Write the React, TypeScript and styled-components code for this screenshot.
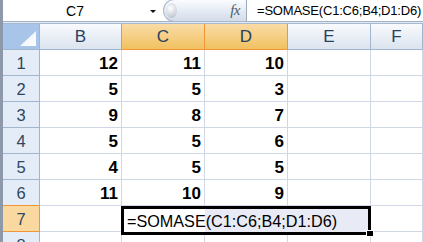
import styled, { createGlobalStyle } from 'styled-components';

const GlobalStyle = createGlobalStyle`
  html, body {
    margin: 0;
    padding: 0;
    background: #ffffff;
    overflow: hidden;
  }
  * {
    box-sizing: border-box;
  }
`;

const Shell = styled.div`
  display: flex;
  width: 423px;
  height: 242px;
  overflow: hidden;
  background: #ffffff;
  font-family: 'Liberation Sans', Arial, sans-serif;
`;

const LeftEdge = styled.div`
  flex: 0 0 3px;
  background: #8d99a9;
`;

const Main = styled.div`
  flex: 1;
  min-width: 0;
  display: flex;
  flex-direction: column;
`;

const FormulaBar = styled.div`
  display: flex;
  height: 22px;
  flex-shrink: 0;
  border-bottom: 1px solid #9fb3cb;
  background: #ffffff;
`;

const NameBox = styled.div`
  display: flex;
  align-items: center;
  flex: 0 0 160px;
  background: #ffffff;
`;

const NameText = styled.span`
  flex: 0 0 144px;
  text-align: center;
  font-size: 14px;
  color: #000;
`;

const DropArrow = styled.span`
  flex: 0 0 11px;
  display: flex;
  justify-content: center;
  padding-top: 1px;
  &::before {
    content: '';
    border-left: 3px solid transparent;
    border-right: 3px solid transparent;
    border-top: 3px solid #111;
  }
`;

const Pill = styled.div`
  display: flex;
  align-items: center;
  justify-content: space-between;
  flex: 0 0 84px;
  margin-top: -1px;
  height: 23px;
  padding: 0 6px 0 2px;
  border: 1px solid #a9b8cb;
  border-right: 1px solid #9aabbf;
  border-radius: 12px 0 0 12px;
  background: linear-gradient(#fbfcfe, #e4eaf3 55%, #d3dce9);
`;

const Knob = styled.span`
  width: 11px;
  height: 15px;
  border-radius: 50%;
  background: radial-gradient(circle at 40% 35%, #ffffff, #c7ced8 70%, #a9b2be);
`;

const Fx = styled.span`
  font-family: 'Liberation Serif', 'Times New Roman', serif;
  font-style: italic;
  font-size: 15px;
  color: #4f5b6c;
  letter-spacing: -0.5px;
`;

const FormulaInput = styled.div`
  flex: 1;
  min-width: 0;
  display: flex;
  align-items: center;
  padding-left: 10px;
  font-size: 13px;
  letter-spacing: -0.2px;
  color: #000;
  white-space: nowrap;
`;

const Band = styled.div`
  height: 2px;
  flex-shrink: 0;
  background: #e1e8f2;
  border-bottom: 1px solid #a8bad0;
`;

const Grid = styled.div`
  position: relative;
  display: grid;
  grid-template-columns: 37px 82px 83px 83px 83px 1fr;
  grid-template-rows: 26px repeat(8, 26px);
`;

const Corner = styled.div`
  display: flex;
  align-items: flex-end;
  justify-content: flex-end;
  padding: 0 3px 3px 0;
  background: #a9c4e9;
  border-right: 1px solid #9eb6ce;
  border-bottom: 1px solid #9eb6ce;
`;

const ColHead = styled.div<{ $sel?: boolean; $edge?: boolean }>`
  display: flex;
  align-items: center;
  justify-content: center;
  font-size: 17px;
  color: #27415f;
  background: ${({ $sel }) =>
    $sel
      ? 'linear-gradient(#f9dba5, #f6cf85 50%, #f1c15f)'
      : 'linear-gradient(#f8fafd, #eaeff6 50%, #dbe3ee)'};
  border-bottom: 1px solid ${({ $sel }) => ($sel ? '#f29536' : '#9eb6ce')};
  border-right: 1px solid
    ${({ $sel, $edge }) => ($sel || $edge ? '#f29536' : '#9eb6ce')};
`;

const RowHead = styled.div<{ $sel?: boolean; $edge?: boolean }>`
  display: flex;
  align-items: center;
  justify-content: center;
  padding-top: 2px;
  font-size: 16.5px;
  color: #2f4560;
  background: ${({ $sel }) => ($sel ? '#f9d99f' : '#e4ecf7')};
  border-right: 1px solid ${({ $sel }) => ($sel ? '#f29536' : '#9eb6ce')};
  border-bottom: 1px solid
    ${({ $sel, $edge }) => ($sel || $edge ? '#f29536' : '#9eb6ce')};
`;

const Cell = styled.div`
  display: flex;
  align-items: center;
  justify-content: flex-end;
  padding: 3px 3px 0 0;
  font-size: 17px;
  font-weight: bold;
  color: #000;
  background: #ffffff;
  border-right: 1px solid #d0d7e5;
  border-bottom: 1px solid #d0d7e5;
`;

const EditBox = styled.div`
  position: absolute;
  left: 118px;
  top: 182px;
  width: 250px;
  height: 29px;
  display: flex;
  align-items: center;
  padding: 2px 0 0 3px;
  border: 3px solid #000;
  background: linear-gradient(to right, #ffffff 81px, #e8eaf5 81px);
  font-size: 16.2px;
  color: #000;
  white-space: nowrap;
`;

const FillHandle = styled.span`
  position: absolute;
  right: -5px;
  bottom: -4px;
  width: 6px;
  height: 5px;
  background: #000;
  outline: 1px solid #ffffff;
`;

const columns = ['B', 'C', 'D', 'E', 'F'];
const selectedCols = ['C', 'D'];

const rows: (number | null)[][] = [
  [12, 11, 10],
  [5, 5, 3],
  [9, 8, 7],
  [5, 5, 6],
  [4, 5, 5],
  [11, 10, 9],
  [null, null, null],
  [null, null, null],
];

export default function App() {
  return (
    <>
      <GlobalStyle />
      <Shell>
        <LeftEdge />
        <Main>
          <FormulaBar>
            <NameBox>
              <NameText>C7</NameText>
              <DropArrow />
            </NameBox>
            <Pill>
              <Knob />
              <Fx>fx</Fx>
            </Pill>
            <FormulaInput>=SOMASE(C1:C6;B4;D1:D6)</FormulaInput>
          </FormulaBar>
          <Band />
          <Grid>
            <Corner>
              <svg width="16" height="15" viewBox="0 0 16 15">
                <defs>
                  <linearGradient id="tri" x1="0" y1="0" x2="1" y2="1">
                    <stop offset="0" stopColor="#e6eef9" />
                    <stop offset="1" stopColor="#ffffff" />
                  </linearGradient>
                </defs>
                <polygon points="16,0 16,15 0,15" fill="url(#tri)" />
              </svg>
            </Corner>
            {columns.map((c, i) => (
              <ColHead
                key={c}
                $sel={selectedCols.includes(c)}
                $edge={selectedCols.includes(columns[i + 1])}
              >
                {c}
              </ColHead>
            ))}
            {rows.map((vals, r) => (
              <>
                <RowHead key={`h${r}`} $sel={r === 6} $edge={r === 5}>
                  {r + 1}
                </RowHead>
                {columns.map((c, i) => (
                  <Cell key={`${r}-${c}`}>{vals[i] ?? ''}</Cell>
                ))}
              </>
            ))}
            <EditBox>
              =SOMASE(C1:C6;B4;D1:D6)
              <FillHandle />
            </EditBox>
          </Grid>
        </Main>
      </Shell>
    </>
  );
}
